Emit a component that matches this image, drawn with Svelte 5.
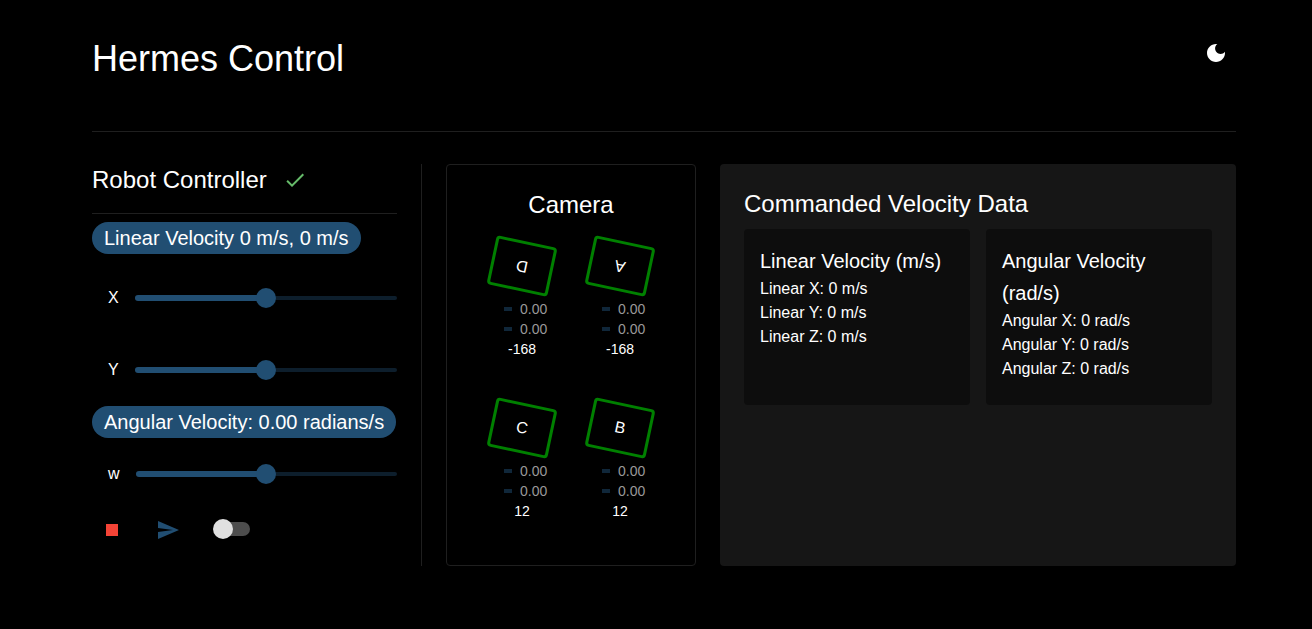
<script>
  let linearX = $state(0);
  let linearY = $state(0);
  let angular = $state(0);
  let live = $state(false);

  const percent = (value) => (value + 1) * 50;

  const modules = [
    { name: 'D', angle: -168, speeds: ['0.00', '0.00'] },
    { name: 'A', angle: -168, speeds: ['0.00', '0.00'] },
    { name: 'C', angle: 12, speeds: ['0.00', '0.00'] },
    { name: 'B', angle: 12, speeds: ['0.00', '0.00'] }
  ];

  const readouts = [
    { title: 'Linear Velocity (m/s)', label: 'Linear', unit: 'm/s' },
    { title: 'Angular Velocity (rad/s)', label: 'Angular', unit: 'rad/s' }
  ];
</script>

{#snippet rails(value)}
  <span class="rail"></span>
  <span class="fill" style="width: {percent(value)}%"></span>
{/snippet}

<div class="page">
  <header>
    <h1>Hermes Control</h1>
    <button class="icon-button" aria-label="Toggle theme">
      <svg viewBox="0 0 24 24" fill="currentColor"><path d="M12 3c-4.97 0-9 4.03-9 9s4.03 9 9 9 9-4.03 9-9c0-.46-.04-.92-.1-1.36-.98 1.37-2.58 2.26-4.4 2.26-2.98 0-5.4-2.42-5.4-5.4 0-1.81.89-3.42 2.26-4.4-.44-.06-.9-.1-1.36-.1z" /></svg>
    </button>
  </header>

  <main>
    <section class="controller">
      <div class="heading">
        <h2>Robot Controller</h2>
        <svg class="check" viewBox="0 0 24 24" fill="currentColor"><path d="M9 16.17 4.83 12l-1.42 1.41L9 19 21 7l-1.41-1.41z" /></svg>
      </div>

      <div class="chip">Linear Velocity {linearX} m/s, {linearY} m/s</div>
      <div class="control tall">
        <label for="linear-x">X</label>
        <div class="slider">
          {@render rails(linearX)}
          <input id="linear-x" type="range" min="-1" max="1" step="0.01" bind:value={linearX} />
        </div>
      </div>
      <div class="control">
        <label for="linear-y">Y</label>
        <div class="slider">
          {@render rails(linearY)}
          <input id="linear-y" type="range" min="-1" max="1" step="0.01" bind:value={linearY} />
        </div>
      </div>

      <div class="chip">Angular Velocity: {angular.toFixed(2)} radians/s</div>
      <div class="control">
        <label for="angular-w">w</label>
        <div class="slider">
          {@render rails(angular)}
          <input id="angular-w" type="range" min="-1" max="1" step="0.01" bind:value={angular} />
        </div>
      </div>

      <div class="actions">
        <button class="icon-button stop" aria-label="Stop">
          <svg viewBox="0 0 24 24" fill="currentColor"><path d="M6 6h12v12H6z" /></svg>
        </button>
        <button class="icon-button send" aria-label="Send">
          <svg viewBox="0 0 24 24" fill="currentColor"><path d="M2.01 21 23 12 2.01 3 2 10l15 2-15 2z" /></svg>
        </button>
        <input class="switch" type="checkbox" role="switch" aria-label="Send continuously" bind:checked={live} />
      </div>
    </section>

    <section class="camera">
      <h2>Camera</h2>
      <div class="modules">
        {#each modules as module}
          <div class="module">
            <div class="wheel" style="transform: rotate({module.angle}deg)">{module.name}</div>
            {#each module.speeds as speed}
              <div class="speed"><span class="bar"></span>{speed}</div>
            {/each}
            <div class="angle">{module.angle}</div>
          </div>
        {/each}
      </div>
    </section>

    <section class="data">
      <h2>Commanded Velocity Data</h2>
      <div class="cards">
        {#each readouts as readout}
          <article>
            <h3>{readout.title}</h3>
            {#each ['X', 'Y', 'Z'] as axis}
              <p>{readout.label} {axis}: 0 {readout.unit}</p>
            {/each}
          </article>
        {/each}
      </div>
    </section>
  </main>
</div>

<style>
  :global(body) {
    margin: 0;
    background: #000;
  }

  .page {
    --blue: #214e72;
    --line: #1f1f1f;
    padding: 33px 76px 33px 92px;
    color: #fff;
    font: 16px/24px "Liberation Sans", Arial, sans-serif;
  }

  .page * {
    box-sizing: border-box;
  }

  h1, h2, h3, p {
    margin: 0;
    font-weight: 400;
  }

  h1 {
    font-size: 36px;
    line-height: 52px;
  }

  h2 {
    font-size: 24px;
    line-height: 32px;
  }

  h3 {
    font-size: 20px;
    line-height: 32px;
  }

  svg {
    display: block;
    width: 24px;
    height: 24px;
  }

  header {
    display: flex;
    justify-content: space-between;
    align-items: flex-start;
    padding-bottom: 46px;
    border-bottom: 1px solid var(--line);
  }

  .icon-button {
    padding: 8px;
    border: 0;
    border-radius: 50%;
    background: none;
    color: #fff;
    cursor: pointer;
  }

  main {
    display: grid;
    grid-template-columns: 330px 250px minmax(0, 1fr);
    gap: 24px;
    margin-top: 32px;
  }

  .controller {
    display: flex;
    flex-direction: column;
    align-items: flex-start;
    padding: 0 24px 16px 0;
    border-right: 1px solid var(--line);
  }

  .heading {
    display: flex;
    align-items: center;
    gap: 16px;
    align-self: stretch;
    margin-bottom: 8px;
    padding-bottom: 17px;
    border-bottom: 1px solid var(--line);
  }

  .check {
    color: #66bb6a;
  }

  .chip {
    padding: 0 12px;
    border-radius: 16px;
    background: var(--blue);
    font-size: 20px;
    line-height: 32px;
    white-space: nowrap;
  }

  .control {
    display: flex;
    align-items: center;
    align-self: stretch;
    gap: 16px;
    height: 72px;
    padding-left: 16px;
  }

  .tall {
    height: 80px;
    padding-top: 8px;
  }

  .slider {
    display: grid;
    flex: 1;
    align-items: center;
  }

  .slider > * {
    grid-area: 1 / 1;
  }

  .rail {
    height: 4px;
    border-radius: 2px;
    background: #0d1e2c;
  }

  .fill {
    height: 6px;
    border-radius: 3px;
    background: var(--blue);
  }

  .slider input {
    appearance: none;
    height: 20px;
    margin: 0 -10px;
    background: none;
    cursor: pointer;
  }

  .slider input::-webkit-slider-thumb {
    appearance: none;
    width: 20px;
    height: 20px;
    border-radius: 50%;
    background: #214e72;
  }

  .actions {
    display: flex;
    gap: 16px;
  }

  .stop {
    color: #f44336;
  }

  .send {
    color: var(--blue);
  }

  .switch {
    appearance: none;
    display: grid;
    align-items: center;
    width: 58px;
    height: 38px;
    margin: 0;
    padding: 0 12px;
    cursor: pointer;
  }

  .switch::before,
  .switch::after {
    content: "";
    grid-area: 1 / 1;
  }

  .switch::before {
    height: 14px;
    border-radius: 7px;
    background: #4d4d4d;
  }

  .switch::after {
    width: 20px;
    height: 20px;
    margin-left: -3px;
    border-radius: 50%;
    background: #e0e0e0;
  }

  .switch:checked::after {
    margin-left: 17px;
    background: var(--blue);
  }

  .camera {
    padding: 24px;
    border: 1px solid var(--line);
    border-radius: 4px;
    text-align: center;
  }

  .modules {
    display: grid;
    grid-template-columns: 62px 62px;
    justify-content: center;
    gap: 44px 36px;
    margin-top: 20px;
  }

  .wheel {
    height: 50px;
    margin-bottom: 8px;
    border: 3px solid #008000;
    border-radius: 4px;
    line-height: 44px;
  }

  .speed,
  .angle {
    font-size: 14px;
    line-height: 20px;
  }

  .speed {
    display: flex;
    align-items: center;
    gap: 8px;
    padding-left: 13px;
    color: #999;
  }

  .bar {
    width: 8px;
    height: 4px;
    background: #10273a;
  }

  .data {
    padding: 24px;
    border-radius: 4px;
    background: #161616;
  }

  .cards {
    display: grid;
    grid-template-columns: 1fr 1fr;
    gap: 16px;
    margin-top: 9px;
  }

  article {
    padding: 16px 16px 24px;
    border-radius: 4px;
    background: #0d0d0d;
  }
</style>
